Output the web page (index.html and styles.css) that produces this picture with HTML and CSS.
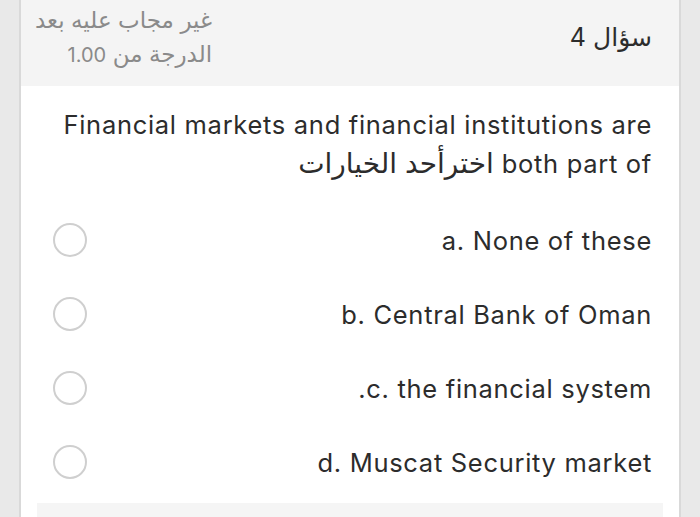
FILE: index.html
```html
<!DOCTYPE html>
<html lang="ar" dir="rtl">
<head>
<meta charset="utf-8">
<link rel="stylesheet" href="styles.css">
</head>
<body>
<div class="page">
  <div class="card">
    <div class="qhead">
      <div class="qtitle">سؤال 4</div>
      <div class="qinfo">
        <div>غير مجاب عليه بعد</div>
        <div>الدرجة من <span class="num">1.00</span></div>
      </div>
    </div>
    <div class="qtext">Financial markets and financial institutions are both part of <span class="ar">اخترأحد الخيارات</span></div>
    <div class="options">
      <div class="opt"><span class="label">a. None of these</span><span class="radio"></span></div>
      <div class="opt"><span class="label">b. Central Bank of Oman</span><span class="radio"></span></div>
      <div class="opt"><span class="label">c. the financial system.</span><span class="radio"></span></div>
      <div class="opt"><span class="label">d. Muscat Security market</span><span class="radio"></span></div>
    </div>
    <div class="footer"></div>
  </div>
</div>
</body>
</html>
```
FILE: styles.css
```css
html, body {
  margin: 0;
  padding: 0;
  background: #e9e9e9;
  height: 100%;
  overflow: hidden;
}
.page {
  direction: ltr;
  padding-left: 19px;
  font-family: "Inter", "DejaVu Sans", sans-serif;
  color: #2c2c2c;
}
.card {
  direction: rtl;
  width: 658px;
  background: #fff;
  border-left: 2px solid #d9d9d9;
  border-right: 2px solid #d9d9d9;
  height: 517px;
  overflow: hidden;
}
.qhead {
  height: 86px;
  background: #f4f4f4;
  display: flex;
  justify-content: space-between;
  align-items: flex-start;
  padding: 0 27px 0 14px;
  box-sizing: border-box;
}
.qtitle {
  font-size: 25px;
  padding-top: 22px;
  line-height: 30px;
}
.qinfo {
  color: #8a8a8a;
  font-size: 23px;
  line-height: 34px;
  padding-top: 3px;
  text-align: right;
}
.num {
  font-size: 20px;
}
.qtext {
  font-size: 25.5px;
  letter-spacing: 0.7px;
  line-height: 38px;
  padding: 20px 27px 0 36px;
  height: 96px;
  box-sizing: border-box;
  margin-bottom: 21px;
}
.ar {
  font-size: 28px;
  letter-spacing: 0;
}
.opt {
  height: 74px;
  display: flex;
  justify-content: space-between;
  align-items: center;
  padding: 0 27px 0 32px;
  font-size: 25.5px;
  letter-spacing: 0.7px;
}
.radio {
  width: 30px;
  height: 30px;
  border: 2px solid #cfcfcf;
  border-radius: 50%;
}
.footer {
  margin: 4px 16px 0 16px;
  height: 30px;
  background: #f5f5f5;
}
```
